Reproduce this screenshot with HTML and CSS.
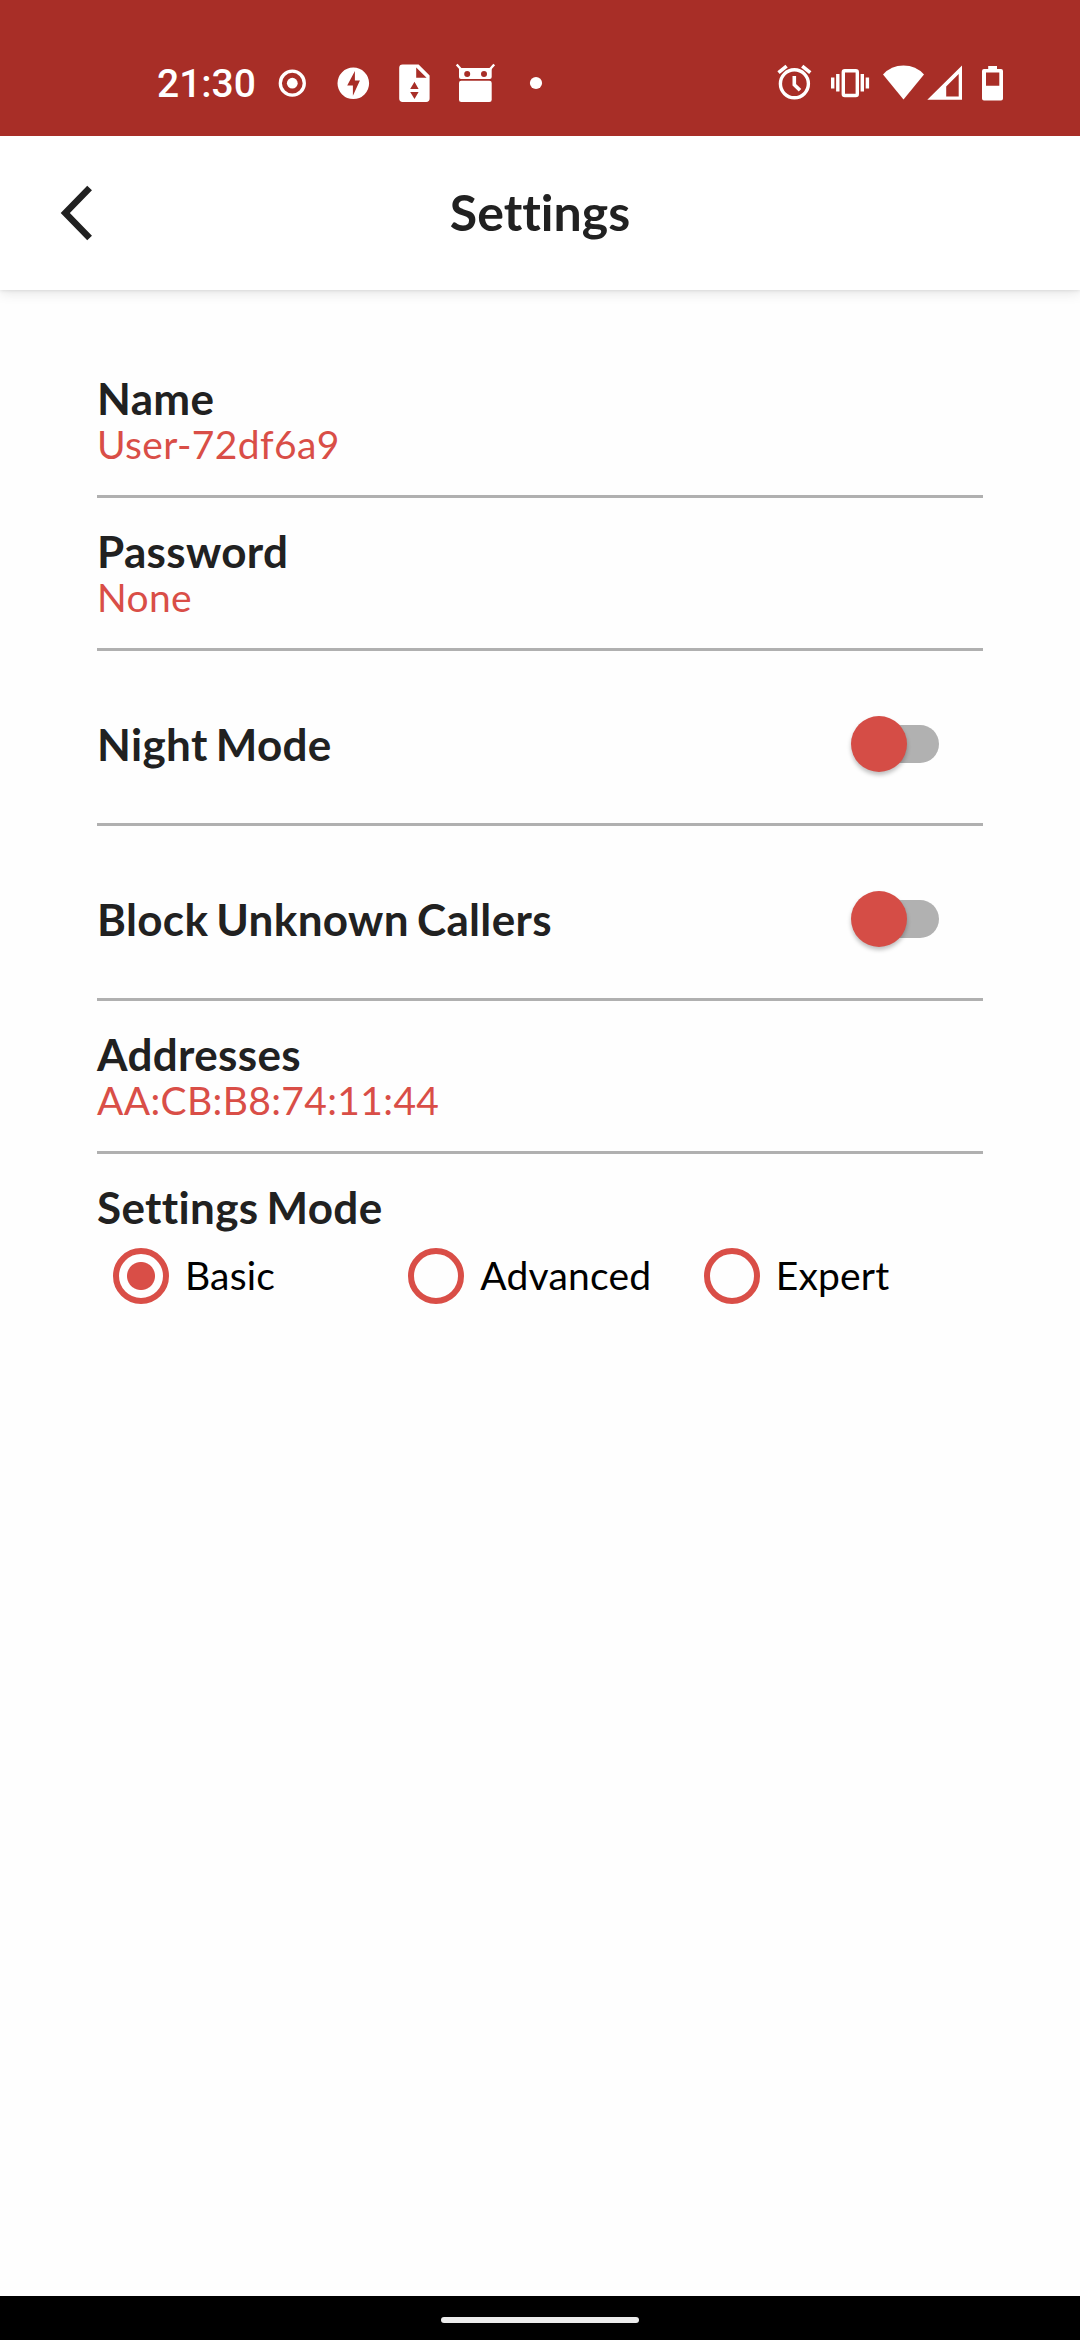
FILE: index.html
```html
<!DOCTYPE html>
<html lang="en">
<head>
<meta charset="utf-8">
<title>Settings</title>
<link rel="stylesheet" href="styles.css">
</head>
<body>
<div class="screen">
  <div class="status-bar">
    <span class="clock">21:30</span>
    <svg class="status-icon" width="60" height="40" viewBox="262 63 60 40"><circle cx="292.3" cy="83.2" r="12" fill="none" stroke="currentColor" stroke-width="3.3"/><circle cx="292.3" cy="83.2" r="5.4"/></svg>
    <svg class="status-icon" width="62" height="40" viewBox="322 63 62 40"><path fill-rule="evenodd" d="M353.3 67.5a15.8 15.8 0 1 0 0 31.6a15.8 15.8 0 1 0 0-31.6zM354.9 71v9.5h5l-7 15.2V85.4h-5.7z"/></svg>
    <svg class="status-icon" width="61" height="40" viewBox="384 63 61 40"><path fill-rule="evenodd" d="M402.6 64.4H418.6L429.6 75.4V98.6Q429.6 102 426.2 102H402.6Q399.2 102 399.2 98.6V67.8Q399.2 64.4 402.6 64.4zM416.2 67.4V77.8H426.6zM414.5 81.7L410.2 88.9H418.6zM410.2 92H418.6L414.5 98.9z"/></svg>
    <svg class="status-icon" width="61" height="40" viewBox="445 63 61 40"><path d="M456.7 64.5l4 4.5M494.2 64.5l-4 4.5" fill="none" stroke="currentColor" stroke-width="2.4"/><path fill-rule="evenodd" d="M459 68H491.7V77Q491.7 79 489.7 79H461Q459 79 459 77zM467.2 71a3 3 0 1 0 0 6a3 3 0 1 0 0-6zM484 71a3 3 0 1 0 0 6a3 3 0 1 0 0-6z"/><rect x="459" y="80.8" width="32.7" height="21.2" rx="2.3"/></svg>
    <svg class="status-icon" width="60" height="40" viewBox="506 63 60 40"><circle cx="536" cy="83" r="6.1"/></svg>
    <svg class="status-icon status-end" width="60" height="40" viewBox="764 63 60 40"><circle cx="794.4" cy="83.8" r="14" fill="none" stroke="currentColor" stroke-width="3.4"/><path d="M794.3 76V84.7L800 90.2M778.5 72.7L786.6 66.2M802.2 66.2L810.3 72.7" fill="none" stroke="currentColor" stroke-width="3.6"/></svg>
    <svg class="status-icon" width="52" height="40" viewBox="824 63 52 40"><rect x="843.3" y="70.7" width="14" height="24.8" rx="1.5" fill="none" stroke="currentColor" stroke-width="3.4"/><path d="M832.7 77.5V88.4M837.8 74V91.5M862.3 74V91.5M867.4 77.5V88.4" fill="none" stroke="currentColor" stroke-width="3.4"/></svg>
    <svg class="status-icon" width="50" height="40" viewBox="876 63 50 40"><path d="M883 74.5Q891 65.5 903.5 65.5T924 74.5L903.5 99.4z"/></svg>
    <svg class="status-icon" width="40" height="40" viewBox="926 63 40 40"><path fill-rule="evenodd" d="M962 65.5V99.7H927.3zM958.7 74V96.5H946.2V86.6z"/></svg>
    <svg class="status-icon" width="50" height="40" viewBox="966 63 50 40"><path fill-rule="evenodd" d="M988.2 66H997V69H1001Q1003 69 1003 71V98.6Q1003 100.6 1001 100.6H984Q982 100.6 982 98.6V71Q982 69 984 69H988.2zM986 72.5V85.7H999.3V72.5z"/></svg>
  </div>
  <header class="app-bar">
    <svg class="back" width="40" height="60" viewBox="0 0 40 60"><path d="M30.6 5L6.3 30L30.6 55" fill="none" stroke="#212121" stroke-width="6.6"/></svg>
    <h1 class="title">Settings</h1>
  </header>
  <main class="settings">
    <section class="row"><div class="label">Name</div><div class="value">User-72df6a9</div></section>
    <section class="row"><div class="label">Password</div><div class="value">None</div></section>
    <section class="row toggle"><div class="label">Night Mode</div><div class="switch"><div class="knob"></div></div></section>
    <section class="row toggle"><div class="label">Block Unknown Callers</div><div class="switch"><div class="knob"></div></div></section>
    <section class="row"><div class="label">Addresses</div><div class="value">AA:CB:B8:74:11:44</div></section>
    <section class="mode">
      <div class="label">Settings Mode</div>
      <div class="options">
        <div class="option"><span class="radio selected"></span><span class="option-name">Basic</span></div>
        <div class="option"><span class="radio"></span><span class="option-name">Advanced</span></div>
        <div class="option"><span class="radio"></span><span class="option-name">Expert</span></div>
      </div>
    </section>
  </main>
  <footer class="nav-bar"><div class="handle"></div></footer>
</div>
</body>
</html>
```
FILE: styles.css
```css
* { box-sizing: border-box; }
body { margin: 0; background: #fefefe; color: #212121; font-family: Lato, sans-serif; font-variant-ligatures: none; }
.screen { width: 1080px; height: 2340px; display: flex; flex-direction: column; }
.status-bar { height: 136px; flex: none; display: flex; padding: 63px 64px 0 157px; background: #a82e27; color: #fff; }
.clock { width: 105px; padding-top: 1px; font: 500 39px/40px Roboto, sans-serif; white-space: nowrap; }
.status-icon { flex: none; fill: currentColor; }
.status-end { margin-left: auto; }
.app-bar { height: 154px; flex: none; display: grid; grid-template-columns: 140px 1fr 140px; align-items: center; background: #fff; box-shadow: 0 3px 12px rgba(0,0,0,.1), 0 0 4px rgba(0,0,0,.12); clip-path: inset(0 0 -24px 0); }
.back { margin-left: 59px; }
.title { margin: 0; padding-bottom: 2px; text-align: center; font-size: 50px; line-height: 60px; font-weight: 700; }
.settings { flex: 1; padding: 55px 97px 0; }
.row { height: 153px; border-bottom: 3px solid #b0b0b0; padding-top: 27px; }
.label { font-size: 44px; line-height: 52px; font-weight: 700; letter-spacing: .35px; word-spacing: -3px; white-space: nowrap; }
.value { font-size: 39px; line-height: 40px; letter-spacing: .35px; color: #d94e47; }
.toggle { height: 175px; padding: 14px 44px 0 0; display: flex; align-items: center; justify-content: space-between; }
.switch { width: 80px; height: 38px; border-radius: 19px; background: #b1b1b1; display: flex; align-items: center; }
.knob { flex: none; width: 56px; height: 56px; margin-left: -8px; border-radius: 50%; background: #d54d46; box-shadow: 0 3px 4px rgba(0,0,0,.25); }
.mode { padding-top: 27px; }
.options { display: grid; grid-template-columns: repeat(3, 1fr); margin-top: 15px; }
.option { display: flex; align-items: center; gap: 16px; padding-left: 16px; height: 56px; font-size: 39px; color: #000; }
.option-name { padding-bottom: 2px; letter-spacing: .2px; }
.radio { flex: none; width: 56px; height: 56px; border: 6px solid #d94e47; border-radius: 50%; }
.selected { background: radial-gradient(circle, #d94e47 13.5px, transparent 14.5px); }
.nav-bar { height: 44px; flex: none; background: #000; padding-top: 21px; }
.handle { width: 198px; height: 6px; margin: 0 auto; border-radius: 3px; background: #ececec; }
```
